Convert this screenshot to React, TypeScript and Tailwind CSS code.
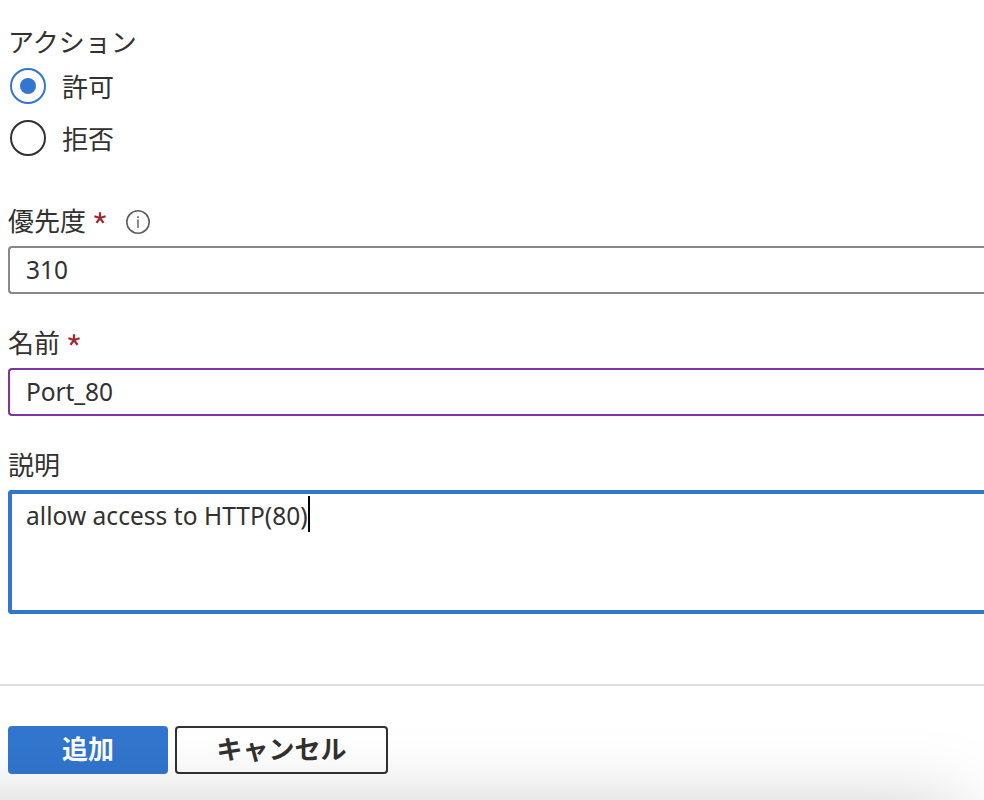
import type { ReactNode } from 'react';

function Label({ children, required }: { children: ReactNode; required?: boolean }) {
  return (
    <div className="flex h-9 items-center text-[26px] leading-9">
      <span className="pb-0.5">{children}</span>
      {required && (
        <svg className="mb-1.5 ml-2 shrink-0" width="12" height="12" viewBox="0 0 12 12" fill="none" stroke="#a4262c" strokeWidth="2.2" aria-label="*">
          <path d="M6 6V0.2M6 6L0.4 4.3M6 6L11.6 4.3M6 6L2.5 10.9M6 6L9.5 10.9" />
        </svg>
      )}
    </div>
  );
}

function Radio({ label, checked }: { label: string; checked?: boolean }) {
  return (
    <div className="flex h-9 items-center">
      <span className={`flex size-9 items-center justify-center rounded-full border-2 ${checked ? 'border-[#3276cf]' : 'border-[#323130]'}`}>
        {checked && <span className="size-4 rounded-full bg-[#3276cf]" />}
      </span>
      <span className="ml-4 text-[26px] leading-9">{label}</span>
    </div>
  );
}

export default function App() {
  return (
    <div
      className="relative h-[800px] w-[984px] overflow-hidden bg-white text-[#323130]"
      style={{ fontFamily: '"Noto Sans CJK JP", sans-serif' }}
    >
      <div className="flex h-[684px] flex-col pl-2 pt-6">
        <Label>アクション</Label>
        <div className="mt-2 flex flex-col gap-4 pl-0.5">
          <Radio label="許可" checked />
          <Radio label="拒否" />
        </div>

        <div className="mt-[47px] flex h-9 items-center">
          <Label required>優先度</Label>
          <svg className="ml-5 mt-0.5" width="24" height="24" viewBox="0 0 24 24" fill="none" stroke="#605e5c">
            <circle cx="12" cy="12" r="11.2" strokeWidth="1.6" />
            <path d="M12 9.5v8.5" strokeWidth="1.4" />
            <path d="M12 6.2v1.7" strokeWidth="1.6" />
          </svg>
        </div>
        <div className="mt-[7px] flex h-12 items-center rounded-l-[4px] border-2 border-r-0 border-[#8a8886] pl-4 font-['Noto_Sans'] text-[24.5px]">
          310
        </div>

        <div className="mt-[31px]">
          <Label required>名前</Label>
        </div>
        <div className="mt-[7px] flex h-12 items-center rounded-l-[4px] border-2 border-r-0 border-[#7f33a3] pl-4 font-['Noto_Sans'] text-[24.5px] tracking-[-0.1px]">
          Port_80
        </div>

        <div className="mt-[31px]">
          <Label>説明</Label>
        </div>
        <div className="mt-[7px] flex h-[124px] items-start rounded-l-[4px] border-4 border-r-0 border-[#3276cf] pl-3.5 pt-0.5 font-['Noto_Sans'] text-[24.5px] leading-9 tracking-[0.04px]">
          <span className="pt-0.5">allow access to HTTP(80)</span>
          <span className="h-9 w-0.5 bg-black" />
        </div>
      </div>

      <div className="flex h-[116px] items-start gap-[7px] border-t-2 border-[#dddddd] pl-2 pt-10 text-[26px] font-bold">
        <button className="h-12 w-40 rounded-[4px] bg-[#3276cf] pb-1 leading-9 text-white">追加</button>
        <button className="h-12 w-[213px] rounded-[4px] border-2 border-[#323130] pb-1 leading-9">キャンセル</button>
      </div>

      <div className="pointer-events-none absolute -left-40 right-6 top-[815px] h-60 shadow-[0_0_84px_rgba(0,0,0,0.26)]" />
    </div>
  );
}
